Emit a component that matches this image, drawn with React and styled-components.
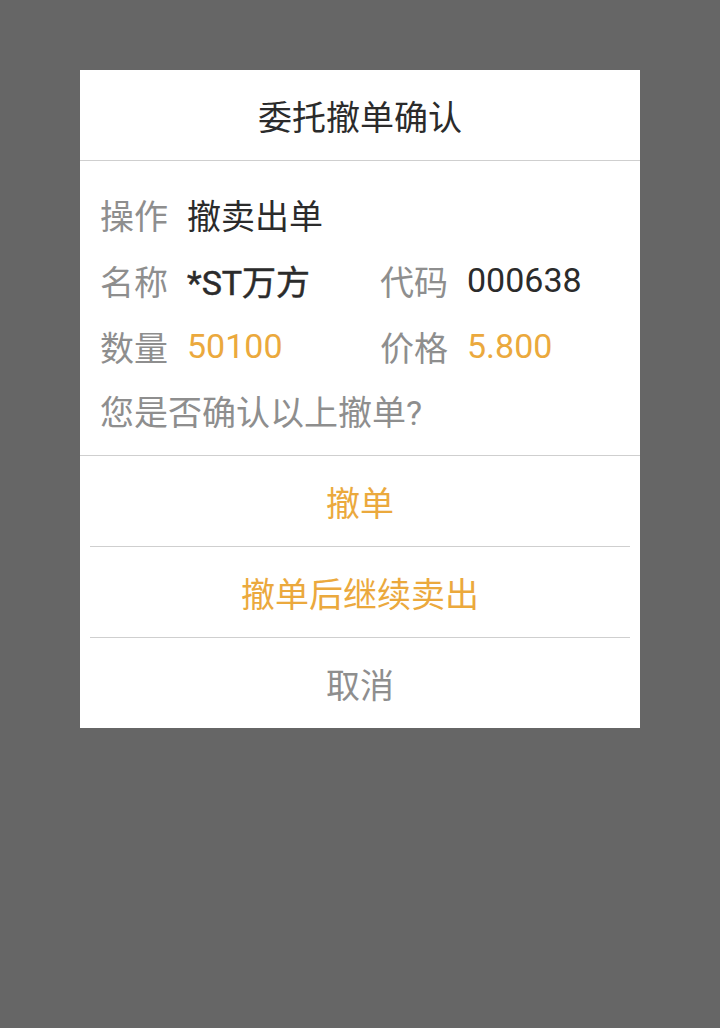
import React from "react";
import styled, { createGlobalStyle } from "styled-components";

const Global = createGlobalStyle`
  html, body {
    margin: 0;
    padding: 0;
    background: #666666;
  }
  body {
    font-family: Roboto, "Noto Sans CJK SC", sans-serif;
  }
`;

const Page = styled.div`
  width: 720px;
  height: 1028px;
  padding-top: 70px;
  box-sizing: border-box;
  display: flex;
  justify-content: center;
  align-items: flex-start;
`;

const Dialog = styled.div`
  width: 560px;
  background: #ffffff;
  display: flex;
  flex-direction: column;
`;

const Title = styled.div`
  height: 90px;
  display: flex;
  align-items: center;
  justify-content: center;
  font-size: 34px;
  color: #2b2b2b;
  border-bottom: 1px solid #cfcfcf;
`;

const Body = styled.div`
  padding: 20px 20px 14px;
  border-bottom: 1px solid #cfcfcf;
`;

const Row = styled.div`
  height: 66px;
  display: flex;
  align-items: center;
`;

const Field = styled.div`
  flex: 0 0 280px;
  display: flex;
  align-items: center;
  gap: 19px;
  font-size: 34px;
`;

const Label = styled.span`
  color: #8e8e8e;
`;

const Value = styled.span`
  color: ${(p) => (p.$accent ? "#eba93d" : "#2b2b2b")};
  -webkit-text-stroke: ${(p) => (p.$strong ? "0.5px #2b2b2b" : "0")};
`;

const Note = styled.div`
  height: 62px;
  display: flex;
  align-items: center;
  font-size: 34px;
  color: #8e8e8e;
`;

const Actions = styled.div`
  display: flex;
  flex-direction: column;
  padding: 0 10px;
`;

const Action = styled.button`
  height: ${(p) => (p.$first ? "90px" : "91px")};
  box-sizing: border-box;
  border: none;
  background: transparent;
  font-family: inherit;
  font-size: 34px;
  color: ${(p) => (p.$muted ? "#8e8e8e" : "#eba93d")};
  border-top: ${(p) => (p.$first ? "none" : "1px solid #cfcfcf")};
  padding: 0;
  cursor: pointer;
`;

export default function App() {
  return (
    <Page>
      <Global />
      <Dialog>
        <Title>委托撤单确认</Title>
        <Body>
          <Row>
            <Field>
              <Label>操作</Label>
              <Value>撤卖出单</Value>
            </Field>
          </Row>
          <Row>
            <Field>
              <Label>名称</Label>
              <Value $strong>*ST万方</Value>
            </Field>
            <Field>
              <Label>代码</Label>
              <Value>000638</Value>
            </Field>
          </Row>
          <Row>
            <Field>
              <Label>数量</Label>
              <Value $accent>50100</Value>
            </Field>
            <Field>
              <Label>价格</Label>
              <Value $accent>5.800</Value>
            </Field>
          </Row>
          <Note>您是否确认以上撤单?</Note>
        </Body>
        <Actions>
          <Action $first>撤单</Action>
          <Action>撤单后继续卖出</Action>
          <Action $muted>取消</Action>
        </Actions>
      </Dialog>
    </Page>
  );
}
